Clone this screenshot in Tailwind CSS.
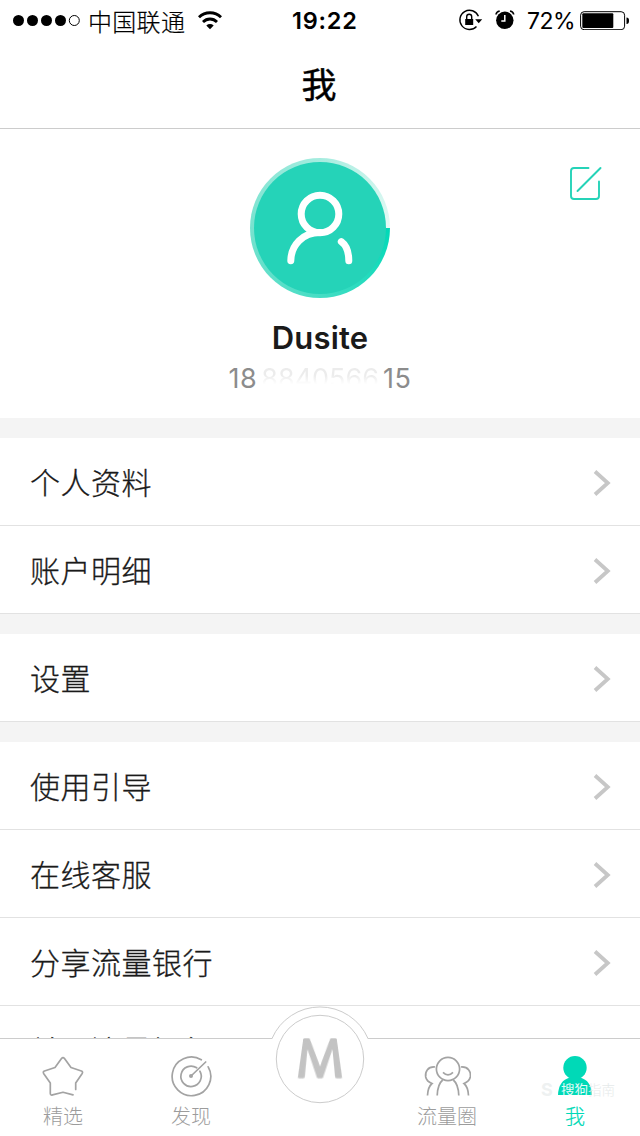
<!doctype html>
<html lang="zh-CN">
  <head>
    <meta charset="UTF-8" />
    <meta name="viewport" content="width=device-width, initial-scale=1.0" />
    <title>我</title>
    <script src="https://cdn.jsdelivr.net/npm/@tailwindcss/browser@4"></script>
  </head>
  <body
    class="flex h-[1136px] w-[640px] flex-col overflow-hidden bg-white font-['Inter','Noto_Sans_CJK_SC',sans-serif] text-[#1a1a1a]"
  >
    <!-- status bar -->
    <div class="flex h-10 shrink-0 items-center text-2xl text-black">
      <div class="flex w-[292px] items-center pl-[13px]">
        <svg class="h-3 w-[67px]" viewBox="0 0 67 12">
          <circle cx="5.5" cy="6.5" r="5.5" />
          <circle cx="19.5" cy="6.5" r="5.5" />
          <circle cx="33.5" cy="6.5" r="5.5" />
          <circle cx="47.5" cy="6.5" r="5.5" />
          <circle cx="61.3" cy="6.5" r="5" fill="none" stroke="#000" />
        </svg>
        <span class="ml-2 w-[97px] whitespace-nowrap pt-px font-['Noto_Sans_CJK_SC',sans-serif] font-light tracking-[0.3px] [-webkit-text-stroke:0.2px_#000]">中国联通</span>
        <svg class="ml-[13px] h-[19px] w-6" viewBox="0 0 24 19" fill="none" stroke="#000" stroke-width="2.8">
          <path d="M1 6.3C7 .2 17 .2 23 6.3" />
          <path d="M5 11c4-4 10-4 14 0" />
          <path d="M12 18.2l-3.7-3.8c2.2-1.8 5.2-1.8 7.4 0z" fill="#000" stroke="none" />
        </svg>
      </div>
      <span class="w-[166px] pt-0.5 text-[23.5px] font-semibold tracking-[0.8px]">19:22</span>
      <svg class="h-6 w-[25px]" viewBox="0 0 25 24" fill="none" stroke="#000" stroke-width="1.4">
        <path d="M20.4 8.3A9.6 9.6 0 1 0 18.5 18.4" />
        <path d="M17.2 11.2h7l-3.5 4z" fill="#000" stroke="none" />
        <path d="M7.2 11h8v6h-8z" fill="#000" stroke="none" />
        <path d="M8.7 11V8.7a2.5 2.5 0 0 1 5 0V11" />
      </svg>
      <svg class="ml-3 h-[22px] w-5" viewBox="0 0 20 22">
        <circle cx="9.8" cy="11.3" r="8.7" />
        <path d="M1 5.5Q1.3 2.8 4.7 2M18.7 5.5Q18.4 2.8 15 2" fill="none" stroke="#000" stroke-width="1.6" />
        <path d="M9.8 6v6H6.3" fill="none" stroke="#fff" stroke-width="1.5" />
      </svg>
      <span class="ml-3 w-[53px] whitespace-nowrap pt-0.5 text-[23px] tracking-[-0.5px]">72%</span>
      <svg class="h-5 w-[50px]" viewBox="0 0 50 20">
        <rect x=".6" y="1.7" width="44" height="18" rx="3.5" fill="none" stroke="#000" />
        <rect x="2.3" y="3.3" width="31" height="14.7" rx="1" />
        <path d="M46.5 7.5q2.5 0 2.5 3.3T46.5 14z" />
      </svg>
    </div>

    <header class="flex h-[89px] shrink-0 items-center justify-center border-b border-[#ccc] pt-0.5 text-black">
      <h1 class="pr-0.5 text-[35px]/[50px] font-normal [-webkit-text-stroke:0.5px_#000]">我</h1>
    </header>

    <div class="min-h-0 flex-1 overflow-hidden bg-[#f4f4f4]">
      <!-- profile -->
      <section class="relative flex h-[289px] flex-col items-center bg-white pt-[29px]">
        <div class="relative size-[140px]">
          <div
            class="size-full rounded-full bg-[conic-gradient(from_90deg,#00d9b7,#46ddc4_25%,#78e2cf_50%,#a5ecdf_75%,#e6faf6)]"
          ></div>
          <svg class="absolute inset-0 size-full" viewBox="0 0 140 140" fill="none">
            <circle cx="70" cy="70" r="66" fill="#25d3b8" />
            <g stroke="#fff" stroke-width="7" stroke-linecap="round">
              <circle cx="70" cy="56" r="18.8" />
              <path d="M40.8 102.8C41 87 53 74.6 70 74.6" />
              <path d="M91.3 83.6C96 87 98.8 94 98.8 102.8" />
            </g>
          </svg>
        </div>
        <h2 class="mt-5 text-[31px]/10 font-semibold tracking-[0.2px]">Dusite</h2>
        <div class="mt-[3px] flex h-9 w-[183px] items-center justify-between text-[27px]/9 text-[#8c8c8c]">
          <span class="tracking-[0.6px]">18</span>
          <span
            class="bg-linear-to-b from-[#ececec] from-40% to-white to-65% bg-clip-text whitespace-nowrap text-transparent"
            >8840566</span
          >
          <span class="tracking-[0.6px]">15</span>
        </div>
        <svg
          class="absolute right-[38px] top-[36px] h-9 w-[34px]"
          viewBox="0 0 34 36"
          fill="none"
          stroke="#25d3b8"
          stroke-width="1.9"
          stroke-linecap="round"
          stroke-linejoin="round"
        >
          <path d="M20.5 3H6Q3 3 3 6v25q0 3 3 3h22q3 0 3-3V16.5" />
          <path d="M9.5 26L32.5 3" />
        </svg>
      </section>

      <svg class="hidden">
        <symbol id="chevron" viewBox="0 0 18 28">
          <path d="M2 3.5l12.8 11.5L2 26.5" fill="none" stroke="#c7c7c7" stroke-width="3.8" />
        </symbol>
      </svg>

      <ul class="mt-5 bg-white text-[30px] font-light tracking-[0.5px] [-webkit-text-stroke:0.3px_#1a1a1a]">
        <li class="flex h-22 items-center justify-between border-b border-[#e2e2e2] pl-[30px] pr-[29px]">
          <span class="pt-1">个人资料</span>
          <svg class="h-7 w-[18px]"><use href="#chevron" /></svg>
        </li>
        <li class="flex h-22 items-center justify-between border-b border-[#e2e2e2] pl-[30px] pr-[29px]">
          <span class="pt-1">账户明细</span>
          <svg class="h-7 w-[18px]"><use href="#chevron" /></svg>
        </li>
      </ul>

      <ul class="mt-5 bg-white text-[30px] font-light tracking-[0.5px] [-webkit-text-stroke:0.3px_#1a1a1a]">
        <li class="flex h-22 items-center justify-between border-b border-[#e2e2e2] pl-[30px] pr-[29px]">
          <span class="pt-1">设置</span>
          <svg class="h-7 w-[18px]"><use href="#chevron" /></svg>
        </li>
      </ul>

      <ul class="mt-5 bg-white text-[30px] font-light tracking-[0.5px] [-webkit-text-stroke:0.3px_#1a1a1a]">
        <li class="flex h-22 items-center justify-between border-b border-[#e2e2e2] pl-[30px] pr-[29px]">
          <span class="pt-1">使用引导</span>
          <svg class="h-7 w-[18px]"><use href="#chevron" /></svg>
        </li>
        <li class="flex h-22 items-center justify-between border-b border-[#e2e2e2] pl-[30px] pr-[29px]">
          <span class="pt-1">在线客服</span>
          <svg class="h-7 w-[18px]"><use href="#chevron" /></svg>
        </li>
        <li class="flex h-22 items-center justify-between border-b border-[#e2e2e2] pl-[30px] pr-[29px]">
          <span class="pt-1">分享流量银行</span>
          <svg class="h-7 w-[18px]"><use href="#chevron" /></svg>
        </li>
        <li class="flex h-22 items-center justify-between border-b border-[#e2e2e2] pl-[30px] pr-[29px]">
          <span class="pt-1">关于流量银行</span>
          <svg class="h-7 w-[18px]"><use href="#chevron" /></svg>
        </li>
      </ul>
    </div>

    <!-- tab bar -->
    <nav
      class="relative grid h-[98px] shrink-0 grid-cols-5 border-t border-[#ccc] bg-white pt-4 text-center text-xl/7 font-light text-[#9c9c9c]"
    >
      <a class="flex flex-col items-center pr-0.5">
        <svg class="h-11 w-12" viewBox="0 0 48 44" fill="none" stroke="#a3a3a3" stroke-width="1.7" stroke-linecap="round" stroke-linejoin="round">
          <path d="M36.7 34.5v-6.5l6.5-9.6q1-1.8-.8-2.4L32 12.5 25.5 3.5q-1.5-1.7-3 0L16 12.5 5.5 16q-1.8.6-.9 2.4L11.3 28v10.5q.2 2 2.2 1.4L24 37.2l10 2.7" />
        </svg>
        <span class="mt-1">精选</span>
      </a>
      <a class="flex flex-col items-center pr-0.5">
        <svg class="h-11 w-12" viewBox="0 0 48 44" fill="none" stroke="#a3a3a3" stroke-width="1.7" stroke-linecap="round">
          <path d="M34.3 4.8A19.3 19.3 0 1 0 41.2 11.8" />
          <path d="M29.7 12.8A10.2 10.2 0 1 0 32.9 16.2" />
          <path d="M24 21L38.7 7" />
          <circle cx="24" cy="21" r="2" fill="#a3a3a3" stroke="none" />
        </svg>
        <span class="mt-1">发现</span>
      </a>
      <a class="relative">
        <!-- raised button, the arc stands above the bar's top border -->
        <svg class="absolute -top-[52px] left-[7px] h-[118px] w-[114px]" viewBox="0 0 114 118" fill="none">
          <path d="M9 36A52.3 52.3 0 0 1 105 36V41H9z" fill="#fff" />
          <path d="M0 35.5H9A52.3 52.3 0 0 1 105 35.5h9" stroke="#ccc" />
          <circle cx="57" cy="56" r="43.7" stroke="#ccc" />
        </svg>
        <svg
          class="absolute -top-[27px] left-[34px] h-[54px] w-[60px] origin-center overflow-visible [transform:perspective(85px)_rotateX(32deg)]"
          viewBox="0 0 60 54"
        >
          <text
            x="30"
            y="48.5"
            text-anchor="middle"
            class="fill-[#c3c3c3] stroke-[#c3c3c3] font-['Inter'] text-[59px] font-light"
            stroke-width="3"
            stroke-linejoin="round"
            textLength="45"
            lengthAdjust="spacingAndGlyphs"
          >M</text>
        </svg>
      </a>
      <a class="flex flex-col items-center pr-0.5">
        <svg class="h-11 w-12" viewBox="0 0 48 44" fill="none" stroke="#a3a3a3" stroke-width="1.7">
          <circle cx="25" cy="14" r="11.6" />
          <path d="M20 17.3q5 5 10 0" />
          <path d="M14.2 40.5C14.5 32 16.5 27.6 19.7 25M35.8 40.5C35.5 32 33.5 27.6 30.3 25" />
          <path d="M12 12C4.5 11.5 1.9 17 2.7 22c.6 3 2.6 5 6.3 6.5C6 31 4.8 35 4.5 40.5" />
          <path d="M38 12c7.5-.5 10.1 5 9.3 10-.6 3-2.6 5-6.3 6.5C44 31 45.2 35 45.5 40.5" />
        </svg>
        <span class="mt-1">流量圈</span>
      </a>
      <a class="relative flex flex-col items-center pr-0.5 text-[#00d9b7]">
        <svg class="h-11 w-12" viewBox="0 0 48 44" fill="#00d9b7">
          <circle cx="24" cy="12.7" r="11.7" />
          <path d="M7 40Q7.5 25.5 19 22.5h10Q40.5 25.5 41 40z" />
        </svg>
        <span class="mt-1 [-webkit-text-stroke:0.2px_#00d9b7]">我</span>
        <div class="absolute left-[29px] top-[23px] flex h-6 items-center whitespace-nowrap text-[13.5px] leading-6">
          <span class="w-[20px] text-left text-lg font-bold text-[#eef1f1]">S</span>
          <span class="font-normal text-white/90">搜狗</span>
          <span class="text-[#e6eaea]">指南</span>
        </div>
      </a>
    </nav>
  </body>
</html>
